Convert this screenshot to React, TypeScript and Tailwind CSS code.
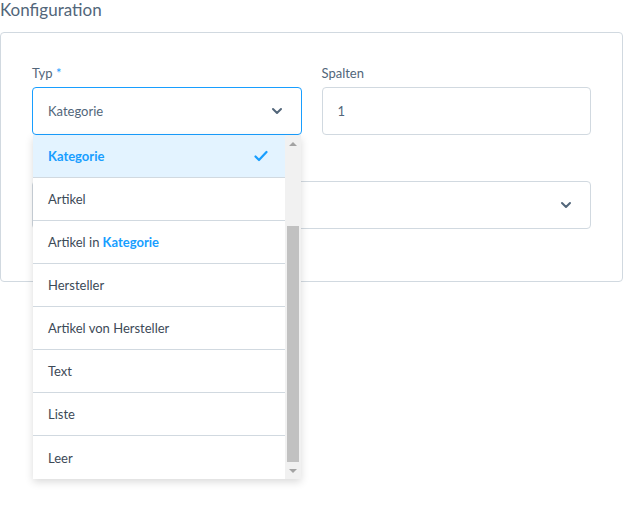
const options = [
  { label: "Kategorie", selected: true },
  { label: "Artikel" },
  { label: "Artikel in", bold: "Kategorie" },
  { label: "Hersteller" },
  { label: "Artikel von Hersteller" },
  { label: "Text" },
  { label: "Liste" },
  { label: "Leer" },
];

function Chevron() {
  return (
    <svg width="14" height="14" viewBox="0 0 14 14" fill="none">
      <path d="M3 5l4 4 4-4" stroke="#52667a" strokeWidth="2" strokeLinecap="round" strokeLinejoin="round" />
    </svg>
  );
}

export default function App() {
  return (
    <div className="w-[623px] h-[512px] bg-white font-['Lato',sans-serif] text-[#52667a] overflow-hidden">
      <h2 className="text-[17px] leading-[20px] h-[32px] text-[#52667a]">Konfiguration</h2>

      <div className="w-[623px] border border-[#d1d9e0] rounded-[4px] px-[31px] pt-[31px] pb-[52px]">
        <div className="grid grid-cols-2 gap-x-[20px]">
          <div className="relative">
            <label className="block text-[13px] leading-[18px] mb-[5px]">
              Typ <span className="text-[#189eff]">*</span>
            </label>
            <div className="h-[48px] border border-[#189eff] rounded-[4px] flex items-center justify-between pl-[15px] pr-[17px] text-[13px]">
              <span className="pt-[2px]">Kategorie</span>
              <Chevron />
            </div>

            {/* open dropdown */}
            <div className="absolute z-10 left-[1px] top-[71px] w-[268px] bg-white shadow-[0_3px_8px_rgba(0,0,0,0.15)] flex">
              <ul className="flex-1">
                {options.map((o) => (
                  <li
                    key={o.label}
                    className={`h-[43px] border-b border-[#d1d9e0] last:border-b-0 flex items-center justify-between pl-[15px] pr-[17px] text-[13px] ${
                      o.selected ? "bg-[#e3f3ff] text-[#189eff] font-bold" : "text-[#3d4a57]"
                    }`}
                  >
                    <span className="pt-[2px]">
                      {o.label}
                      {o.bold && <span className="font-bold text-[#189eff]"> {o.bold}</span>}
                    </span>
                    {o.selected && (
                      <svg width="14" height="12" viewBox="0 0 14 12" fill="none">
                        <path d="M1.5 6.5l3.5 3.5 7.5-8" stroke="#189eff" strokeWidth="2.2" strokeLinecap="round" strokeLinejoin="round" />
                      </svg>
                    )}
                  </li>
                ))}
              </ul>
              <div className="w-[16px] bg-[#f1f1f1] flex flex-col items-center">
                <div className="h-[17px] flex items-center justify-center">
                  <div className="w-0 h-0 border-l-[4px] border-r-[4px] border-b-[4px] border-l-transparent border-r-transparent border-b-[#a3a3a3]" />
                </div>
                <div className="h-[74px]" />
                <div className="w-[12px] h-[236px] bg-[#c1c1c1]" />
                <div className="flex-1 flex items-center justify-center">
                  <div className="w-0 h-0 border-l-[4px] border-r-[4px] border-t-[4px] border-l-transparent border-r-transparent border-t-[#a3a3a3]" />
                </div>
              </div>
            </div>
          </div>

          <div>
            <label className="block text-[13px] leading-[18px] mb-[5px]">Spalten</label>
            <div className="h-[48px] border border-[#d1d9e0] rounded-[4px] flex items-center pl-[15px] text-[13px]">
              <span className="pt-[2px]">1</span>
            </div>
          </div>

          {/* second row, its label sits under the open list */}
          <div className="col-span-2 mt-[23px]">
            <div className="h-[23px]" />
            <div className="h-[48px] border border-[#d1d9e0] rounded-[4px] flex items-center justify-end pr-[17px]">
              <Chevron />
            </div>
          </div>
        </div>
      </div>
    </div>
  );
}
